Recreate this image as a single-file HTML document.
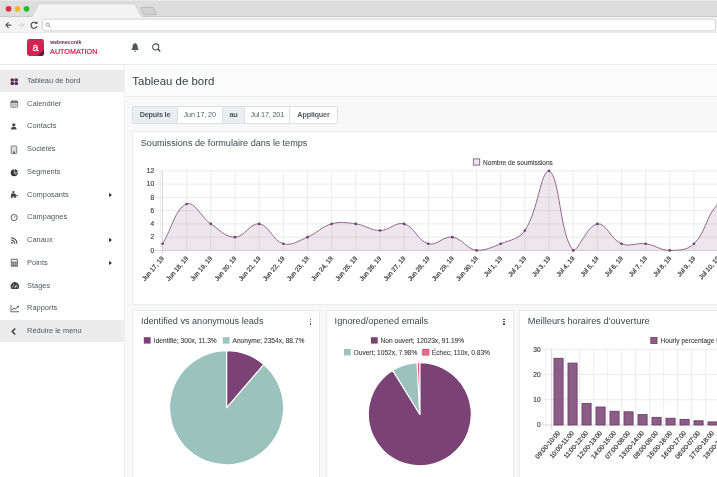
<!DOCTYPE html>
<html lang="fr">
<head>
<meta charset="utf-8">
<title>Tableau de bord</title>
<style>
*{box-sizing:border-box;margin:0;padding:0}
html,body{width:717px;height:477px;overflow:hidden;background:#f8f8f8}
body{font-family:"Liberation Sans", sans-serif;color:#47535f;position:relative}
#root{position:absolute;left:0;top:0;width:717px;height:477px;overflow:hidden;background:transparent;will-change:transform}
.abs{position:absolute}
/* browser chrome */
#tabbar{left:0;top:0;width:717px;height:17px;background:#dddddd;border-top:1px solid #e8e8e8}
#toolbar{left:0;top:16px;width:717px;height:17px;background:#f3f3f3;border-top:1px solid #c9c9c9;border-bottom:1px solid #ebebeb}
/* app header */
#hdr{left:0;top:33px;width:717px;height:32px;background:#fff;border-bottom:1px solid #e9e9e9}
#logo{left:27px;top:39px;width:17.4px;height:17.4px;border-radius:2.4px;background:#cf2350;overflow:hidden}
#logo b{position:absolute;left:-0.2px;top:0.7px;width:17.4px;text-align:center;color:#fff;font-size:10.4px;line-height:16.8px;font-weight:normal;-webkit-text-stroke:0.3px #fff}
#logo i{position:absolute;right:-5.8px;bottom:-5.8px;width:11.6px;height:11.6px;background:#521f50;transform:rotate(45deg)}
#brand1{left:50.2px;top:39.3px;font-size:5.05px;line-height:6px;font-weight:bold;color:#5c2358;letter-spacing:0.1px}
#brand2{left:50.1px;top:47.4px;font-size:7.2px;line-height:9px;color:#cf2350;-webkit-text-stroke:0.22px #cf2350}
/* sidebar */
#side{left:0;top:65px;width:124.6px;height:412px;background:#fff;border-right:1px solid #efefef}
.mi{position:absolute;left:0;width:124.4px;height:22.72px;font-size:7.43px;line-height:22.72px;color:#50565c}
.actbg{position:absolute;left:0;width:124.4px;height:22px;background:#ececec}
.mi .ic{position:absolute;left:10px;top:7.7px;overflow:visible}
.mi span{position:absolute;left:27.1px;top:0;white-space:nowrap}
.mi .ar{position:absolute;left:109.4px;top:9.2px;width:0;height:0;border-left:3px solid #2e2e2e;border-top:2.5px solid transparent;border-bottom:2.5px solid transparent}
/* main */
#ptitle{left:124.5px;top:65px;width:593px;height:32.2px;background:#fcfcfc;border-bottom:1px solid #ececec}
#ptitle h1{font-weight:normal;white-space:nowrap;position:absolute;left:7.8px;top:7.7px;font-size:11.45px;line-height:16px;color:#363e47}
.panel{background:#fff;border:1px solid #ececec}
.pt{position:absolute;font-size:9.12px;line-height:12px;color:#3e4852;white-space:nowrap}
.seg{position:absolute;top:0;height:18px;font-size:7.25px;letter-spacing:-0.17px;line-height:16.6px;text-align:center;border:1px solid #dcdfe2;border-left-width:0;white-space:nowrap;overflow:hidden;color:#555f69}
.seg.g{background:#ebeef0;font-weight:bold;color:#4a545e}
.seg.w{background:#fff}
svg text.ax{font-family:"Liberation Sans", sans-serif;font-size:6.6px;fill:#454545;stroke:#454545;stroke-width:0.18px}
svg text.axx{font-size:6.42px;stroke-width:0.26px}
svg text.lg{font-family:"Liberation Sans", sans-serif;font-size:6.6px;fill:#3c3c3c;stroke:#3c3c3c;stroke-width:0.1px}
.kb{position:absolute;width:1.5px;height:1.5px;border-radius:50%;background:#2e2e2e}
</style>
</head>
<body>
<div id="root">
<!-- browser chrome -->
<div id="tabbar" class="abs"></div>
<div id="toolbar" class="abs"></div>
<svg class="abs" style="left:0;top:0" width="717" height="18" viewBox="0 0 717 18">
<path d="M28 17.3 L30 16.6 C32.4 16.6 33 15.6 34 13.4 L37.6 5.9 C38.4 4.3 39.2 3.8 40.8 3.8 L132.8 3.8 C134.4 3.8 135.2 4.3 136 5.9 L139.6 13.4 C140.6 15.6 141.2 16.6 143.6 16.6 L145.6 17.3" fill="#f3f3f3" stroke="#c8c8c8" stroke-width="0.7"/>
<circle cx="8.6" cy="8.85" r="2.9" fill="#dc2c4c"/><circle cx="17.6" cy="8.85" r="2.9" fill="#f8b433"/><circle cx="26.6" cy="8.85" r="2.9" fill="#28ba2e"/>
<path d="M141.8 7.4 L152.2 7.4 Q153.2 7.4 153.6 8.2 L156 13.8 Q156.4 14.8 155.4 14.8 L145 14.8 Q144 14.8 143.6 14 L141.2 8.4 Q140.8 7.4 141.8 7.4 Z" fill="#d2d2d2" stroke="#b4b4b4" stroke-width="0.8"/>
</svg>
<svg class="abs" style="left:0;top:0" width="717" height="34" viewBox="0 0 717 34"><rect x="42.5" y="19.2" width="673" height="11.7" rx="2.8" fill="#fff" stroke="#d0d0d0" stroke-width="0.9"/></svg>
<svg class="abs" style="left:0;top:17px" width="60" height="16" viewBox="0 0 60 16">
<path d="M11.4 8.1 L6.2 8.1 M8.6 5.4 L5.9 8.1 L8.6 10.8" fill="none" stroke="#555" stroke-width="1.05"/>
<path d="M18.4 8.2 L23.6 8.2 M21.2 5.6 L23.8 8.2 L21.2 10.8" fill="none" stroke="#cdcdcd" stroke-width="0.9"/>
<path d="M36.3 6.3 A3 3 0 1 0 36.9 9.3" fill="none" stroke="#444" stroke-width="1.1"/>
<path d="M37.5 4.3 L37.2 7.1 L34.6 6.5 Z" fill="#444"/>
<circle cx="47.6" cy="7.6" r="1.6" fill="none" stroke="#777" stroke-width="0.7"/>
<path d="M48.8 8.8 L50.4 10.4" stroke="#777" stroke-width="0.8"/>
</svg>
<!-- app header -->
<header id="hdr" class="abs"></header>
<div id="logo" class="abs"><b>a</b><i></i></div>
<div id="brand1" class="abs">webmeconik</div>
<div id="brand2" class="abs">AUTOMATION</div>
<svg class="abs" style="left:130px;top:41px" width="34" height="12" viewBox="0 0 34 12">
<path d="M5.1 2 C5.5 2 5.7 2.2 5.7 2.6 C7 3 7.6 4.1 7.6 5.5 C7.6 7.1 8 7.8 8.7 8.5 L8.7 9.1 L1.5 9.1 L1.5 8.5 C2.2 7.8 2.6 7.1 2.6 5.5 C2.6 4.1 3.2 3 4.5 2.6 C4.5 2.2 4.7 2 5.1 2 Z" fill="#4c545e"/>
<path d="M4.1 9.7 L6.1 9.7 C6.1 10.4 5.7 10.8 5.1 10.8 C4.5 10.8 4.1 10.4 4.1 9.7 Z" fill="#4c545e"/>
<circle cx="25.7" cy="5.9" r="3.05" fill="none" stroke="#4a525c" stroke-width="1.05"/>
<path d="M28.1 8.3 L29.8 10" stroke="#3f4750" stroke-width="1.5" stroke-linecap="round"/>
</svg>
<!-- sidebar -->
<aside id="side" class="abs"></aside>
<nav class="abs" style="left:0;top:0;width:124.4px;height:477px">
<div class="actbg" style="top:70px"></div>
<div class="actbg" style="top:320px"></div>
<div class="mi act" style="top:70.04px"><svg class="ic" width="7.6" height="7.6" viewBox="0 0 9.2 9.2"><g transform="translate(0.6 0)"><rect x="0.2" y="0.6" width="4" height="3.5" rx="0.8" fill="#5c2358"/><rect x="5" y="0.6" width="4" height="3.5" rx="0.8" fill="#5c2358"/><rect x="0.2" y="4.9" width="4" height="3.5" rx="0.8" fill="#5c2358"/><rect x="5" y="4.9" width="4" height="3.5" rx="0.8" fill="#5c2358"/></g></svg><span>Tableau de bord</span></div>
<div class="mi" style="top:92.76px"><svg class="ic" width="7.6" height="7.6" viewBox="0 0 9.2 9.2"><g transform="translate(0.5 0)"><rect x="0.6" y="1.4" width="8.2" height="7.4" rx="1" fill="#e6e6e6" stroke="#6e6e6e" stroke-width="1"/><rect x="0.6" y="1.4" width="8.2" height="2.2" fill="#6e6e6e"/><rect x="2.2" y="-0.2" width="1.1" height="2.4" fill="#6e6e6e"/><rect x="6.1" y="-0.2" width="1.1" height="2.4" fill="#6e6e6e"/><path d="M0.8 5.6 H8.6 M3.4 3.6 V8.6 M6 3.6 V8.6" stroke="#9a9a9a" stroke-width="0.6" fill="none"/></g></svg><span>Calendrier</span></div>
<div class="mi" style="top:115.48px"><svg class="ic" width="7.6" height="7.6" viewBox="0 0 9.2 9.2"><g transform="translate(0.6 0)"><circle cx="4" cy="2.2" r="2" fill="#4a4a4a"/><path d="M0.6 8 C0.6 5.2 2 4.4 4 4.4 C6 4.4 7.4 5.2 7.4 8 Z" fill="#4a4a4a"/></g></svg><span>Contacts</span></div>
<div class="mi" style="top:138.20px"><svg class="ic" width="7.6" height="7.6" viewBox="0 0 9.2 9.2"><g transform="translate(0.4 0)"><rect x="1" y="0" width="6.8" height="9.2" rx="0.9" fill="#dcdcdc" stroke="#6a6a6a" stroke-width="1"/><rect x="3.4" y="6.6" width="2" height="2.2" fill="#555"/></g></svg><span>Sociétés</span></div>
<div class="mi" style="top:160.92px"><svg class="ic" width="7.6" height="7.6" viewBox="0 0 9.2 9.2"><g transform="translate(0.9 0)"><circle cx="4.3" cy="4.5" r="4.3" fill="#333"/><path d="M4.3 0 L4.3 4.5 L8.6 4.5 M4.3 4.5 L7.2 7.8" stroke="#fff" stroke-width="0.8" fill="none"/></g></svg><span>Segments</span></div>
<div class="mi" style="top:183.64px"><svg class="ic" width="7.6" height="7.6" viewBox="0 0 9.2 9.2"><g transform="translate(0.7 0)"><circle cx="3.4" cy="1.3" r="1.35" fill="#3c3c3c"/><path d="M0.6 8.6 L0.6 4 C0.6 3.2 1.2 2.9 2 2.9 L4.8 2.9 C5.6 2.9 6.2 3.2 6.2 4 L6.2 5 L8.8 5 L8.8 6.4 L6.2 6.4 L6.2 8.6 L4.4 8.6 L4.4 6.8 L2.4 6.8 L2.4 8.6 Z" fill="#3c3c3c"/></g></svg><span>Composants</span><i class="ar"></i></div>
<div class="mi" style="top:206.36px"><svg class="ic" width="7.6" height="7.6" viewBox="0 0 9.2 9.2"><g transform="translate(0.8 0)"><circle cx="4.2" cy="4.3" r="3.7" fill="none" stroke="#444" stroke-width="1.05"/><path d="M4.2 4.6 L5.6 2.6" fill="none" stroke="#444" stroke-width="0.9"/></g></svg><span>Campagnes</span></div>
<div class="mi" style="top:229.08px"><svg class="ic" width="7.6" height="7.6" viewBox="0 0 9.2 9.2"><g transform="translate(1 0.1)"><circle cx="1.3" cy="7" r="1.1" fill="#3c3c3c"/><path d="M0.3 3.6 A4.4 4.4 0 0 1 4.7 8" fill="none" stroke="#3c3c3c" stroke-width="1.25"/><path d="M0.3 0.8 A7.2 7.2 0 0 1 7.5 8" fill="none" stroke="#3c3c3c" stroke-width="1.25"/></g></svg><span>Canaux</span><i class="ar"></i></div>
<div class="mi" style="top:251.80px"><svg class="ic" width="7.6" height="7.6" viewBox="0 0 9.2 9.2"><g transform="translate(0.8 0)"><rect x="0.2" y="-0.3" width="8.6" height="9.8" rx="1.1" fill="#737373"/><rect x="1.4" y="1" width="6.2" height="2.2" fill="#f4f4f4"/><rect x="1.4" y="4.6" width="6.2" height="0.9" fill="#cfcfcf"/><rect x="1.4" y="6.6" width="6.2" height="0.9" fill="#cfcfcf"/><path d="M3.4 4.2 V8.2 M5.6 4.2 V8.2" stroke="#737373" stroke-width="0.6"/></g></svg><span>Points</span><i class="ar"></i></div>
<div class="mi" style="top:274.52px"><svg class="ic" width="7.6" height="7.6" viewBox="0 0 9.2 9.2"><g transform="translate(0.9 0)"><path d="M0.9 8.4 A5.1 5.1 0 1 1 9.1 8.4 Z" fill="#444"/><path d="M5 7.2 L6.9 3.4" stroke="#fff" stroke-width="1"/><circle cx="2.4" cy="5.8" r="0.65" fill="#fff"/><circle cx="3.4" cy="3.6" r="0.65" fill="#fff"/><circle cx="7.7" cy="5.8" r="0.65" fill="#fff"/></g></svg><span>Stages</span></div>
<div class="mi" style="top:297.24px"><svg class="ic" width="7.6" height="7.6" viewBox="0 0 9.2 9.2"><g transform="translate(0.6 -0.2)"><path d="M0.5 0.2 L0.5 8.4 L10.6 8.4" fill="none" stroke="#4a4a4a" stroke-width="1"/><path d="M2 6.4 L4.2 3.8 L6 5.2 L9.2 2" fill="none" stroke="#4a4a4a" stroke-width="1.15"/><path d="M7.4 1.4 L10 1.2 L9.8 3.8 Z" fill="#4a4a4a"/></g></svg><span>Rapports</span></div>
<div class="mi act" style="top:319.96px"><svg class="ic" width="7.6" height="7.6" viewBox="0 0 9.2 9.2"><g transform="translate(0.7 0)"><path d="M5.6 0.6 L2 4.2 L5.6 7.8" fill="none" stroke="#333" stroke-width="1.6"/></g></svg><span>Réduire le menu</span></div>
</nav>
<!-- page title -->
<div id="ptitle" class="abs"><h1>Tableau de bord</h1></div>
<!-- date filter -->
<div class="abs" style="left:132.4px;top:106px;width:210px;height:18px">
<div class="seg g" style="left:0;width:45.2px;border-left-width:1px;border-radius:2px 0 0 2px">Depuis le</div>
<div class="seg w" style="left:45.2px;width:45.2px">Jun 17, 20</div>
<div class="seg g" style="left:90.4px;width:22.4px">au</div>
<div class="seg w" style="left:112.8px;width:45.2px">Jul 17, 201</div>
<div class="seg w" style="left:158px;width:47.2px;font-weight:bold;border-radius:0 2px 2px 0">Appliquer</div>
</div>
<!-- panel 1 -->
<div class="abs panel" style="left:132.1px;top:131.4px;width:600px;height:173.3px"></div>
<div class="pt" style="left:140.8px;top:136.6px">Soumissions de formulaire dans le temps</div>
<!-- panel A -->
<div class="abs panel" style="left:132.1px;top:310.1px;width:188.4px;height:180px"></div>
<div class="pt" style="left:140.9px;top:315px">Identified vs anonymous leads</div>
<div class="kb" style="left:309.5px;top:318.5px"></div><div class="kb" style="left:309.5px;top:320.9px"></div><div class="kb" style="left:309.5px;top:323.3px"></div>
<!-- panel B -->
<div class="abs panel" style="left:326.3px;top:310.1px;width:187.6px;height:180px"></div>
<div class="pt" style="left:334.6px;top:315px;font-size:9.21px">Ignored/opened emails</div>
<div class="kb" style="left:503.1px;top:318.5px"></div><div class="kb" style="left:503.1px;top:320.9px"></div><div class="kb" style="left:503.1px;top:323.3px"></div>
<!-- panel C -->
<div class="abs panel" style="left:519.4px;top:310.1px;width:220px;height:180px"></div>
<div class="pt" style="left:527.7px;top:315px;font-size:9.29px">Meilleurs horaires d'ouverture</div>
<!-- charts -->
<svg class="abs" style="left:0;top:0" width="717" height="477" viewBox="0 0 717 477">
<line x1="154.6" y1="250.40" x2="717" y2="250.40" stroke="#c4c4c4" stroke-width="0.7"/>
<line x1="154.6" y1="237.14" x2="717" y2="237.14" stroke="#e4e4e4" stroke-width="0.7"/>
<line x1="154.6" y1="223.88" x2="717" y2="223.88" stroke="#e4e4e4" stroke-width="0.7"/>
<line x1="154.6" y1="210.62" x2="717" y2="210.62" stroke="#e4e4e4" stroke-width="0.7"/>
<line x1="154.6" y1="197.37" x2="717" y2="197.37" stroke="#e4e4e4" stroke-width="0.7"/>
<line x1="154.6" y1="184.11" x2="717" y2="184.11" stroke="#e4e4e4" stroke-width="0.7"/>
<line x1="154.6" y1="170.85" x2="717" y2="170.85" stroke="#e4e4e4" stroke-width="0.7"/>
<line x1="160.3" y1="170.85" x2="160.3" y2="253.40" stroke="#e2e2e2" stroke-width="0.7"/>
<line x1="162.55" y1="170.85" x2="162.55" y2="253.90" stroke="#c6c6c6" stroke-width="0.7"/>
<line x1="186.71" y1="170.85" x2="186.71" y2="253.90" stroke="#e4e4e4" stroke-width="0.7"/>
<line x1="210.86" y1="170.85" x2="210.86" y2="253.90" stroke="#e4e4e4" stroke-width="0.7"/>
<line x1="235.02" y1="170.85" x2="235.02" y2="253.90" stroke="#e4e4e4" stroke-width="0.7"/>
<line x1="259.17" y1="170.85" x2="259.17" y2="253.90" stroke="#e4e4e4" stroke-width="0.7"/>
<line x1="283.33" y1="170.85" x2="283.33" y2="253.90" stroke="#e4e4e4" stroke-width="0.7"/>
<line x1="307.48" y1="170.85" x2="307.48" y2="253.90" stroke="#e4e4e4" stroke-width="0.7"/>
<line x1="331.63" y1="170.85" x2="331.63" y2="253.90" stroke="#e4e4e4" stroke-width="0.7"/>
<line x1="355.79" y1="170.85" x2="355.79" y2="253.90" stroke="#e4e4e4" stroke-width="0.7"/>
<line x1="379.95" y1="170.85" x2="379.95" y2="253.90" stroke="#e4e4e4" stroke-width="0.7"/>
<line x1="404.10" y1="170.85" x2="404.10" y2="253.90" stroke="#e4e4e4" stroke-width="0.7"/>
<line x1="428.26" y1="170.85" x2="428.26" y2="253.90" stroke="#e4e4e4" stroke-width="0.7"/>
<line x1="452.41" y1="170.85" x2="452.41" y2="253.90" stroke="#e4e4e4" stroke-width="0.7"/>
<line x1="476.56" y1="170.85" x2="476.56" y2="253.90" stroke="#e4e4e4" stroke-width="0.7"/>
<line x1="500.72" y1="170.85" x2="500.72" y2="253.90" stroke="#e4e4e4" stroke-width="0.7"/>
<line x1="524.88" y1="170.85" x2="524.88" y2="253.90" stroke="#e4e4e4" stroke-width="0.7"/>
<line x1="549.03" y1="170.85" x2="549.03" y2="253.90" stroke="#e4e4e4" stroke-width="0.7"/>
<line x1="573.18" y1="170.85" x2="573.18" y2="253.90" stroke="#e4e4e4" stroke-width="0.7"/>
<line x1="597.34" y1="170.85" x2="597.34" y2="253.90" stroke="#e4e4e4" stroke-width="0.7"/>
<line x1="621.50" y1="170.85" x2="621.50" y2="253.90" stroke="#e4e4e4" stroke-width="0.7"/>
<line x1="645.65" y1="170.85" x2="645.65" y2="253.90" stroke="#e4e4e4" stroke-width="0.7"/>
<line x1="669.81" y1="170.85" x2="669.81" y2="253.90" stroke="#e4e4e4" stroke-width="0.7"/>
<line x1="693.96" y1="170.85" x2="693.96" y2="253.90" stroke="#e4e4e4" stroke-width="0.7"/>
<line x1="718.12" y1="170.85" x2="718.12" y2="253.90" stroke="#e4e4e4" stroke-width="0.7"/>
<line x1="742.27" y1="170.85" x2="742.27" y2="253.90" stroke="#e4e4e4" stroke-width="0.7"/>
<path d="M162.55 243.77 C172.21 227.86 175.15 208.75 186.71 204.00 C194.47 200.80 200.58 216.83 210.86 223.88 C219.91 230.09 225.35 237.14 235.02 237.14 C244.68 237.14 250.12 222.64 259.17 223.88 C269.45 225.29 272.59 240.83 283.33 243.77 C291.92 246.13 298.28 240.93 307.48 237.14 C317.60 232.97 321.34 226.71 331.63 223.88 C340.66 221.41 346.30 222.58 355.79 223.88 C365.63 225.23 370.28 230.51 379.95 230.51 C389.61 230.51 395.51 221.53 404.10 223.88 C414.83 226.83 417.52 240.83 428.26 243.77 C436.85 246.13 443.21 235.88 452.41 237.14 C462.53 238.53 466.44 249.01 476.56 250.40 C485.77 250.40 491.52 247.56 500.72 243.77 C510.84 239.60 519.08 239.26 524.88 230.51 C538.41 210.09 540.60 170.85 549.03 170.85 C559.92 175.33 559.69 235.58 573.18 250.40 C579.01 250.40 587.02 225.30 597.34 223.88 C606.34 222.65 610.59 239.28 621.50 243.77 C629.91 247.24 636.16 242.47 645.65 243.77 C655.49 245.12 660.14 250.40 669.81 250.40 C679.47 250.40 687.20 250.27 693.96 243.77 C706.52 231.70 705.55 216.06 718.12 204.00 C724.88 197.50 732.61 200.02 742.27 197.37 L742.27 250.40 L162.55 250.40 Z" fill="rgba(123,63,117,0.13)"/>
<path d="M162.55 243.77 C172.21 227.86 175.15 208.75 186.71 204.00 C194.47 200.80 200.58 216.83 210.86 223.88 C219.91 230.09 225.35 237.14 235.02 237.14 C244.68 237.14 250.12 222.64 259.17 223.88 C269.45 225.29 272.59 240.83 283.33 243.77 C291.92 246.13 298.28 240.93 307.48 237.14 C317.60 232.97 321.34 226.71 331.63 223.88 C340.66 221.41 346.30 222.58 355.79 223.88 C365.63 225.23 370.28 230.51 379.95 230.51 C389.61 230.51 395.51 221.53 404.10 223.88 C414.83 226.83 417.52 240.83 428.26 243.77 C436.85 246.13 443.21 235.88 452.41 237.14 C462.53 238.53 466.44 249.01 476.56 250.40 C485.77 250.40 491.52 247.56 500.72 243.77 C510.84 239.60 519.08 239.26 524.88 230.51 C538.41 210.09 540.60 170.85 549.03 170.85 C559.92 175.33 559.69 235.58 573.18 250.40 C579.01 250.40 587.02 225.30 597.34 223.88 C606.34 222.65 610.59 239.28 621.50 243.77 C629.91 247.24 636.16 242.47 645.65 243.77 C655.49 245.12 660.14 250.40 669.81 250.40 C679.47 250.40 687.20 250.27 693.96 243.77 C706.52 231.70 705.55 216.06 718.12 204.00 C724.88 197.50 732.61 200.02 742.27 197.37" fill="none" stroke="#8e608a" stroke-width="0.95"/>
<circle cx="162.55" cy="243.77" r="1.35" fill="#74406f"/>
<circle cx="186.71" cy="204.00" r="1.35" fill="#74406f"/>
<circle cx="210.86" cy="223.88" r="1.35" fill="#74406f"/>
<circle cx="235.02" cy="237.14" r="1.35" fill="#74406f"/>
<circle cx="259.17" cy="223.88" r="1.35" fill="#74406f"/>
<circle cx="283.33" cy="243.77" r="1.35" fill="#74406f"/>
<circle cx="307.48" cy="237.14" r="1.35" fill="#74406f"/>
<circle cx="331.63" cy="223.88" r="1.35" fill="#74406f"/>
<circle cx="355.79" cy="223.88" r="1.35" fill="#74406f"/>
<circle cx="379.95" cy="230.51" r="1.35" fill="#74406f"/>
<circle cx="404.10" cy="223.88" r="1.35" fill="#74406f"/>
<circle cx="428.26" cy="243.77" r="1.35" fill="#74406f"/>
<circle cx="452.41" cy="237.14" r="1.35" fill="#74406f"/>
<circle cx="476.56" cy="250.40" r="1.35" fill="#74406f"/>
<circle cx="500.72" cy="243.77" r="1.35" fill="#74406f"/>
<circle cx="524.88" cy="230.51" r="1.35" fill="#74406f"/>
<circle cx="549.03" cy="170.85" r="1.35" fill="#74406f"/>
<circle cx="573.18" cy="250.40" r="1.35" fill="#74406f"/>
<circle cx="597.34" cy="223.88" r="1.35" fill="#74406f"/>
<circle cx="621.50" cy="243.77" r="1.35" fill="#74406f"/>
<circle cx="645.65" cy="243.77" r="1.35" fill="#74406f"/>
<circle cx="669.81" cy="250.40" r="1.35" fill="#74406f"/>
<circle cx="693.96" cy="243.77" r="1.35" fill="#74406f"/>
<circle cx="718.12" cy="204.00" r="1.35" fill="#74406f"/>
<circle cx="742.27" cy="197.37" r="1.35" fill="#74406f"/>
<text x="154.2" y="252.70" text-anchor="end" class="ax">0</text>
<text x="154.2" y="239.44" text-anchor="end" class="ax">2</text>
<text x="154.2" y="226.18" text-anchor="end" class="ax">4</text>
<text x="154.2" y="212.93" text-anchor="end" class="ax">6</text>
<text x="154.2" y="199.67" text-anchor="end" class="ax">8</text>
<text x="154.2" y="186.41" text-anchor="end" class="ax">10</text>
<text x="154.2" y="173.15" text-anchor="end" class="ax">12</text>
<text transform="translate(164.35 258.60) rotate(-49.5)" text-anchor="end" class="ax axx">Jun 17, 19</text>
<text transform="translate(188.51 258.60) rotate(-49.5)" text-anchor="end" class="ax axx">Jun 18, 19</text>
<text transform="translate(212.66 258.60) rotate(-49.5)" text-anchor="end" class="ax axx">Jun 19, 19</text>
<text transform="translate(236.82 258.60) rotate(-49.5)" text-anchor="end" class="ax axx">Jun 20, 19</text>
<text transform="translate(260.97 258.60) rotate(-49.5)" text-anchor="end" class="ax axx">Jun 21, 19</text>
<text transform="translate(285.13 258.60) rotate(-49.5)" text-anchor="end" class="ax axx">Jun 22, 19</text>
<text transform="translate(309.28 258.60) rotate(-49.5)" text-anchor="end" class="ax axx">Jun 23, 19</text>
<text transform="translate(333.44 258.60) rotate(-49.5)" text-anchor="end" class="ax axx">Jun 24, 19</text>
<text transform="translate(357.59 258.60) rotate(-49.5)" text-anchor="end" class="ax axx">Jun 25, 19</text>
<text transform="translate(381.75 258.60) rotate(-49.5)" text-anchor="end" class="ax axx">Jun 26, 19</text>
<text transform="translate(405.90 258.60) rotate(-49.5)" text-anchor="end" class="ax axx">Jun 27, 19</text>
<text transform="translate(430.06 258.60) rotate(-49.5)" text-anchor="end" class="ax axx">Jun 28, 19</text>
<text transform="translate(454.21 258.60) rotate(-49.5)" text-anchor="end" class="ax axx">Jun 29, 19</text>
<text transform="translate(478.37 258.60) rotate(-49.5)" text-anchor="end" class="ax axx">Jun 30, 19</text>
<text transform="translate(502.52 258.60) rotate(-49.5)" text-anchor="end" class="ax axx">Jul 1, 19</text>
<text transform="translate(526.67 258.60) rotate(-49.5)" text-anchor="end" class="ax axx">Jul 2, 19</text>
<text transform="translate(550.83 258.60) rotate(-49.5)" text-anchor="end" class="ax axx">Jul 3, 19</text>
<text transform="translate(574.98 258.60) rotate(-49.5)" text-anchor="end" class="ax axx">Jul 4, 19</text>
<text transform="translate(599.14 258.60) rotate(-49.5)" text-anchor="end" class="ax axx">Jul 5, 19</text>
<text transform="translate(623.30 258.60) rotate(-49.5)" text-anchor="end" class="ax axx">Jul 6, 19</text>
<text transform="translate(647.45 258.60) rotate(-49.5)" text-anchor="end" class="ax axx">Jul 7, 19</text>
<text transform="translate(671.61 258.60) rotate(-49.5)" text-anchor="end" class="ax axx">Jul 8, 19</text>
<text transform="translate(695.76 258.60) rotate(-49.5)" text-anchor="end" class="ax axx">Jul 9, 19</text>
<text transform="translate(719.91 258.60) rotate(-49.5)" text-anchor="end" class="ax axx">Jul 10, 19</text>
<text transform="translate(744.07 258.60) rotate(-49.5)" text-anchor="end" class="ax axx">Jul 11, 19</text>
<rect x="473.4" y="158.9" width="6.3" height="6.2" fill="rgba(123,63,117,0.13)" stroke="#8a5a86" stroke-width="0.9"/>
<text x="483.1" y="164.5" class="lg" style="font-size:6.5px">Nombre de soumissions</text>
<path d="M226.60 407.80 L226.60 350.80 A57.00 57.00 0 0 1 263.75 364.57 Z" fill="#7a4275" stroke="#fff" stroke-width="1.1" stroke-linejoin="round"/>
<path d="M226.60 407.80 L263.75 364.57 A57.00 57.00 0 1 1 226.60 350.80 Z" fill="#9cc2be" stroke="#fff" stroke-width="1.1" stroke-linejoin="round"/>
<rect x="143.8" y="337.2" width="6.8" height="6.4" fill="#7a4275"/>
<text x="153.8" y="343.2" class="lg">Identifié; 300x, 11.3%</text>
<rect x="222.8" y="337.2" width="6.8" height="6.4" fill="#9cc2be"/>
<text x="232.5" y="343.2" class="lg">Anonyme; 2354x, 88.7%</text>
<path d="M419.80 414.20 L419.80 362.70 A51.50 51.50 0 1 1 392.73 370.39 Z" fill="#7a4275" stroke="#fff" stroke-width="1.1" stroke-linejoin="round"/>
<path d="M419.80 414.20 L392.73 370.39 A51.50 51.50 0 0 1 417.12 362.77 Z" fill="#9cc2be" stroke="#fff" stroke-width="1.1" stroke-linejoin="round"/>
<path d="M419.80 414.20 L417.12 362.77 A51.50 51.50 0 0 1 419.80 362.70 Z" fill="#e0527a" stroke="#fff" stroke-width="1.1" stroke-linejoin="round"/>
<rect x="370.9" y="337.2" width="6.8" height="6.4" fill="#7a4275"/>
<text x="380.6" y="343.2" class="lg">Non ouvert; 12023x, 91.19%</text>
<rect x="343.9" y="349" width="6.8" height="6.4" fill="#9cc2be"/>
<text x="353.6" y="355" class="lg">Ouvert; 1052x, 7.98%</text>
<rect x="422.7" y="349.3" width="6.2" height="5.8" fill="#e5718d" stroke="#d63a60" stroke-width="0.8"/>
<text x="431.8" y="355" class="lg">Échec; 110x, 0.83%</text>
<line x1="541.5" y1="425.00" x2="717" y2="425.00" stroke="#c4c4c4" stroke-width="0.7"/>
<text x="540.6" y="427.30" text-anchor="end" class="ax">0</text>
<line x1="541.5" y1="399.77" x2="717" y2="399.77" stroke="#e4e4e4" stroke-width="0.7"/>
<text x="540.6" y="402.07" text-anchor="end" class="ax">10</text>
<line x1="541.5" y1="374.53" x2="717" y2="374.53" stroke="#e4e4e4" stroke-width="0.7"/>
<text x="540.6" y="376.83" text-anchor="end" class="ax">20</text>
<line x1="541.5" y1="349.30" x2="717" y2="349.30" stroke="#e4e4e4" stroke-width="0.7"/>
<text x="540.6" y="351.60" text-anchor="end" class="ax">30</text>
<line x1="545.6" y1="349.30" x2="545.6" y2="428.50" stroke="#e6e6e6" stroke-width="0.7"/>
<line x1="551.70" y1="349.30" x2="551.70" y2="428.50" stroke="#c4c4c4" stroke-width="0.7"/>
<line x1="565.70" y1="349.30" x2="565.70" y2="428.50" stroke="#e4e4e4" stroke-width="0.7"/>
<line x1="579.70" y1="349.30" x2="579.70" y2="428.50" stroke="#e4e4e4" stroke-width="0.7"/>
<line x1="593.70" y1="349.30" x2="593.70" y2="428.50" stroke="#e4e4e4" stroke-width="0.7"/>
<line x1="607.70" y1="349.30" x2="607.70" y2="428.50" stroke="#e4e4e4" stroke-width="0.7"/>
<line x1="621.70" y1="349.30" x2="621.70" y2="428.50" stroke="#e4e4e4" stroke-width="0.7"/>
<line x1="635.70" y1="349.30" x2="635.70" y2="428.50" stroke="#e4e4e4" stroke-width="0.7"/>
<line x1="649.70" y1="349.30" x2="649.70" y2="428.50" stroke="#e4e4e4" stroke-width="0.7"/>
<line x1="663.70" y1="349.30" x2="663.70" y2="428.50" stroke="#e4e4e4" stroke-width="0.7"/>
<line x1="677.70" y1="349.30" x2="677.70" y2="428.50" stroke="#e4e4e4" stroke-width="0.7"/>
<line x1="691.70" y1="349.30" x2="691.70" y2="428.50" stroke="#e4e4e4" stroke-width="0.7"/>
<line x1="705.70" y1="349.30" x2="705.70" y2="428.50" stroke="#e4e4e4" stroke-width="0.7"/>
<line x1="719.70" y1="349.30" x2="719.70" y2="428.50" stroke="#e4e4e4" stroke-width="0.7"/>
<rect x="554.00" y="358.33" width="9.1" height="66.67" fill="#8b5d87" stroke="#713d6c" stroke-width="0.9"/>
<text transform="translate(560.30 433.20) rotate(-49.5)" text-anchor="end" class="ax axx">09:00-10:00</text>
<rect x="568.00" y="363.12" width="9.1" height="61.88" fill="#8b5d87" stroke="#713d6c" stroke-width="0.9"/>
<text transform="translate(574.30 433.20) rotate(-49.5)" text-anchor="end" class="ax axx">10:00-11:00</text>
<rect x="582.00" y="403.50" width="9.1" height="21.50" fill="#8b5d87" stroke="#713d6c" stroke-width="0.9"/>
<text transform="translate(588.30 433.20) rotate(-49.5)" text-anchor="end" class="ax axx">11:00-12:00</text>
<rect x="596.00" y="407.03" width="9.1" height="17.97" fill="#8b5d87" stroke="#713d6c" stroke-width="0.9"/>
<text transform="translate(602.30 433.20) rotate(-49.5)" text-anchor="end" class="ax axx">12:00-13:00</text>
<rect x="610.00" y="411.32" width="9.1" height="13.68" fill="#8b5d87" stroke="#713d6c" stroke-width="0.9"/>
<text transform="translate(616.30 433.20) rotate(-49.5)" text-anchor="end" class="ax axx">14:00-15:00</text>
<rect x="624.00" y="411.82" width="9.1" height="13.18" fill="#8b5d87" stroke="#713d6c" stroke-width="0.9"/>
<text transform="translate(630.30 433.20) rotate(-49.5)" text-anchor="end" class="ax axx">07:00-08:00</text>
<rect x="638.00" y="414.60" width="9.1" height="10.40" fill="#8b5d87" stroke="#713d6c" stroke-width="0.9"/>
<text transform="translate(644.30 433.20) rotate(-49.5)" text-anchor="end" class="ax axx">13:00-14:00</text>
<rect x="652.00" y="417.38" width="9.1" height="7.62" fill="#8b5d87" stroke="#713d6c" stroke-width="0.9"/>
<text transform="translate(658.30 433.20) rotate(-49.5)" text-anchor="end" class="ax axx">08:00-09:00</text>
<rect x="666.00" y="418.26" width="9.1" height="6.74" fill="#8b5d87" stroke="#713d6c" stroke-width="0.9"/>
<text transform="translate(672.30 433.20) rotate(-49.5)" text-anchor="end" class="ax axx">15:00-16:00</text>
<rect x="680.00" y="419.39" width="9.1" height="5.61" fill="#8b5d87" stroke="#713d6c" stroke-width="0.9"/>
<text transform="translate(686.30 433.20) rotate(-49.5)" text-anchor="end" class="ax axx">16:00-17:00</text>
<rect x="694.00" y="420.78" width="9.1" height="4.22" fill="#8b5d87" stroke="#713d6c" stroke-width="0.9"/>
<text transform="translate(700.30 433.20) rotate(-49.5)" text-anchor="end" class="ax axx">06:00-07:00</text>
<rect x="708.00" y="421.92" width="9.1" height="3.08" fill="#8b5d87" stroke="#713d6c" stroke-width="0.9"/>
<text transform="translate(714.30 433.20) rotate(-49.5)" text-anchor="end" class="ax axx">17:00-18:00</text>
<rect x="722.00" y="422.42" width="9.1" height="2.58" fill="#8b5d87" stroke="#713d6c" stroke-width="0.9"/>
<text transform="translate(728.30 433.20) rotate(-49.5)" text-anchor="end" class="ax axx">18:00-19:00</text>
<rect x="650.8" y="337.4" width="6.2" height="6.2" fill="#8b5d87" stroke="#713d6c" stroke-width="0.8"/>
<text x="660.5" y="343.2" class="lg">Hourly percentage for email opens</text>
</svg>
</div>
</body>
</html>
